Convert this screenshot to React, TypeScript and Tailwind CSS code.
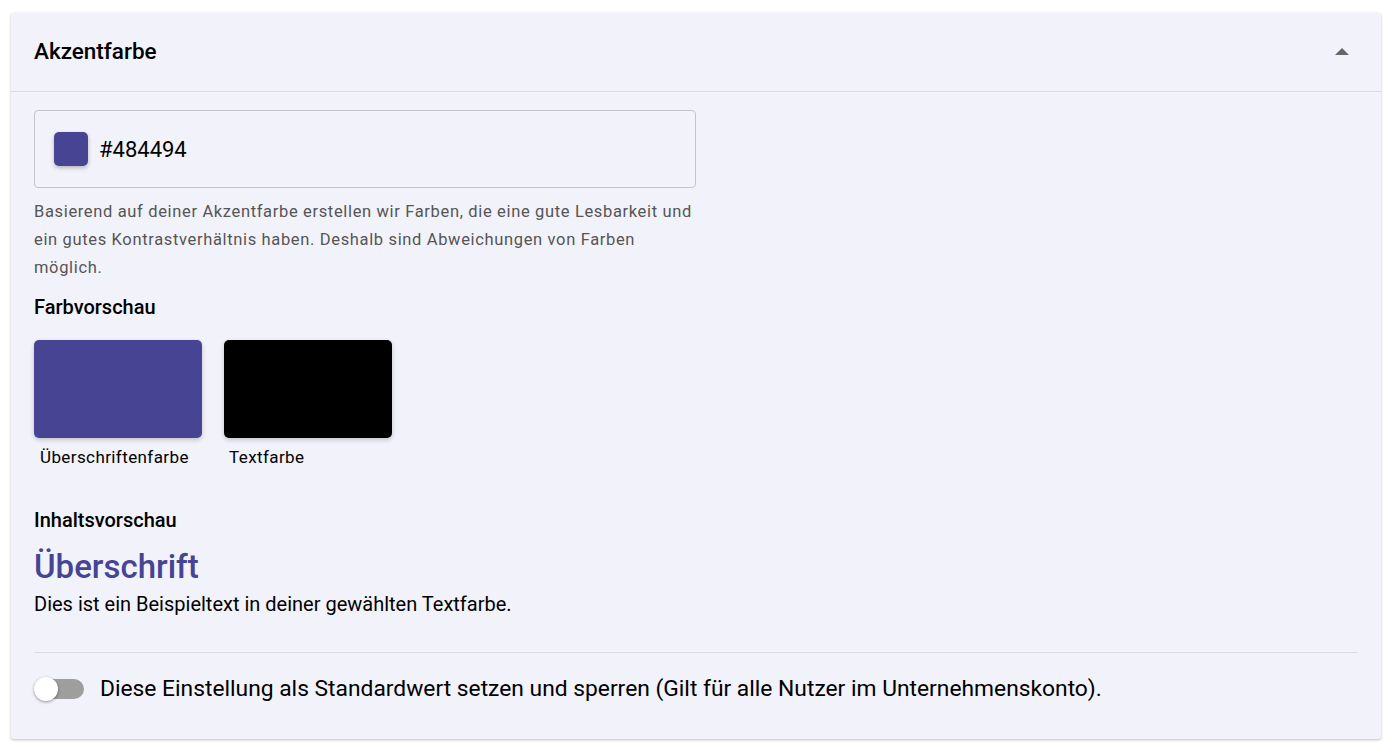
import React from "react";

export default function App() {
  return (
    <div className="min-h-[755px] bg-white pt-[13px] px-[11px] pb-[15px]" style={{ fontFamily: "Roboto, 'Noto Sans', sans-serif" }}>
      <div className="bg-[#f2f2fa] rounded-[2px] shadow-[0_1px_3px_rgba(0,0,0,0.25)] w-[1370px]">
        <div className="h-[79px] flex items-center justify-between pl-[23px] pr-[32px] border-b border-[#dcdce4]">
          <div className="text-[22.5px] font-medium text-black">Akzentfarbe</div>
          <svg width="14" height="8" viewBox="0 0 14 8"><path d="M0 7 L7 0 L14 7 Z" fill="#666" /></svg>
        </div>
        <div className="px-[23px] pt-[18px] pb-[36px]">
          <div className="w-[662px] h-[78px] border border-[#c4c4c8] rounded-[4px] flex items-center pl-[19px]">
            <div className="w-[34px] h-[34px] rounded-[5px] bg-[#484494] shadow-[0_2px_4px_rgba(0,0,0,0.25)]" />
            <span className="ml-[11px] text-[22px] text-black">#484494</span>
          </div>
          <p className="mt-[10px] w-[665px] text-[16.5px] leading-[28px] text-[#555] tracking-[0.65px]">
            Basierend auf deiner Akzentfarbe erstellen wir Farben, die eine gute Lesbarkeit und ein gutes Kontrastverhältnis haben. Deshalb sind Abweichungen von Farben möglich.
          </p>
          <div className="mt-[13px] text-[20px] font-medium text-black leading-[24px]">Farbvorschau</div>
          <div className="mt-[21px] flex gap-[22px]">
            <div className="flex flex-col">
              <div className="w-[168px] h-[98px] rounded-[5px] bg-[#484494] shadow-[0_2px_5px_rgba(0,0,0,0.2)]" />
              <div className="mt-[7px] pl-[6px] text-[17px] tracking-[0.4px] text-black leading-[24px]">Überschriftenfarbe</div>
            </div>
            <div className="flex flex-col">
              <div className="w-[168px] h-[98px] rounded-[5px] bg-black shadow-[0_2px_5px_rgba(0,0,0,0.2)]" />
              <div className="mt-[7px] pl-[5px] text-[17px] tracking-[0.4px] text-black leading-[24px]">Textfarbe</div>
            </div>
          </div>
          <div className="mt-[39px] text-[20px] font-medium text-black leading-[24px]">Inhaltsvorschau</div>
          <div className="mt-[15px] text-[33px] font-medium text-[#484494] leading-[40px]">Überschrift</div>
          <div className="mt-[3px] text-[20px] text-black leading-[28px]">Dies ist ein Beispieltext in deiner gewählten Textfarbe.</div>
          <div className="mt-[34px] border-t border-[#dcdce4]" />
          <div className="mt-[22px] flex items-center h-[28px]">
            <div className="relative w-[50px] h-[24px] flex items-center">
              <div className="w-[50px] h-[20px] rounded-full bg-[#9e9e9e] ml-[1px]" />
              <div className="absolute left-0 top-0 w-[24px] h-[24px] rounded-full bg-white shadow-[0_1px_3px_rgba(0,0,0,0.4)]" />
            </div>
            <span className="ml-[16px] text-[22.8px] leading-[28px] text-black">Diese Einstellung als Standardwert setzen und sperren (Gilt für alle Nutzer im Unternehmenskonto).</span>
          </div>
        </div>
      </div>
    </div>
  );
}
